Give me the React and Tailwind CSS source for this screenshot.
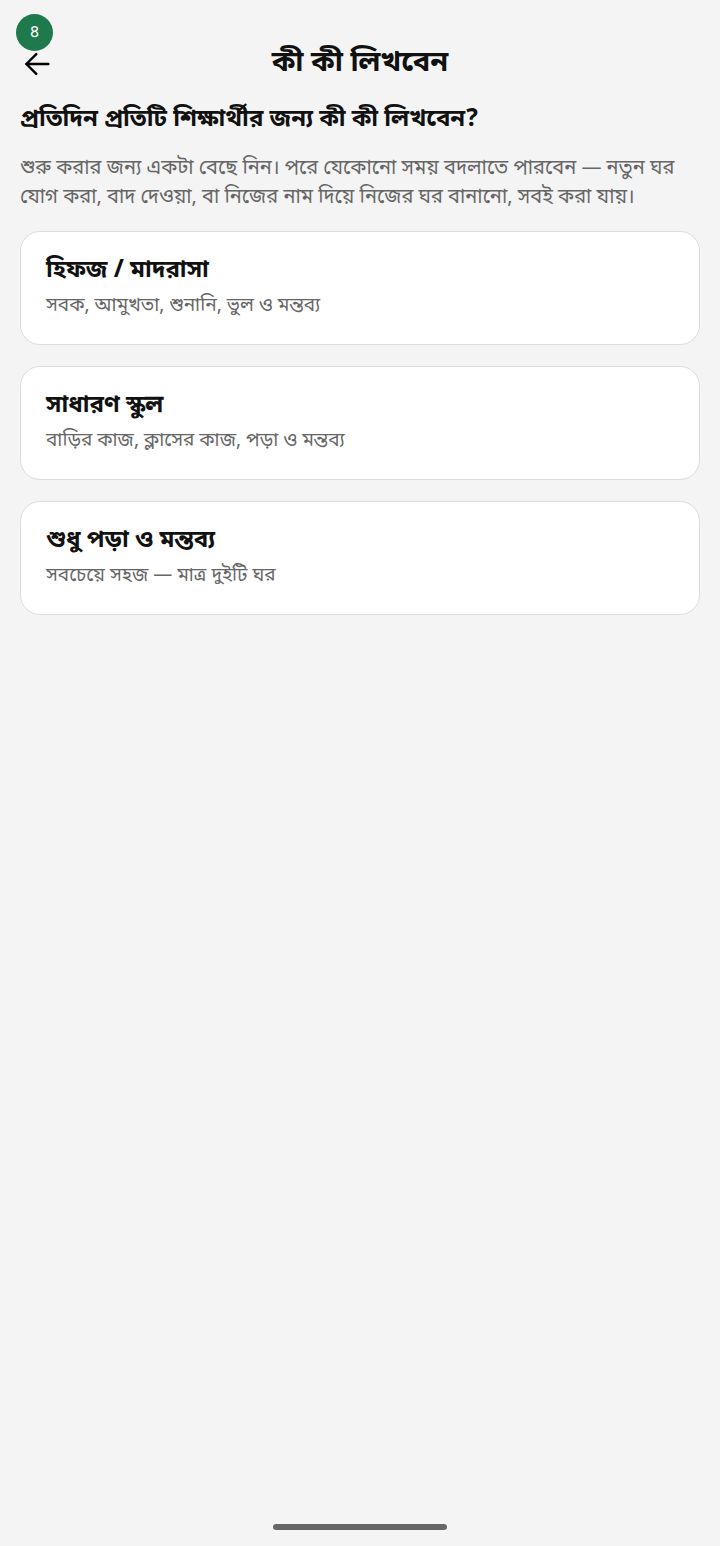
import React from 'react'

const options = [
  { title: <>হিফজ / মাদরাসা</>, body: 'সবক, আমুখতা, শুনানি, ভুল ও মন্তব্য' },
  { title: <>সাধারণ স্কু<span className="font-semibold [-webkit-text-stroke:0.6px_#111]">ল</span></>, body: 'বাড়ির কাজ, ক্লাসের কাজ, পড়া ও মন্তব্য' },
  { title: <>শুধু পড়া ও মন্তব্য</>, body: 'সবচেয়ে সহজ — মাত্র দুইটি ঘর' },
]

const App = () => {
  return (
    <div
      className="relative w-[720px] h-[1546px] bg-[#f4f4f4] flex flex-col"
      style={{ fontFamily: '"Noto Sans Bengali", "Noto Sans", "Lohit Bengali", sans-serif' }}
    >
      {/* Step badge */}
      <div className="absolute left-[16px] top-[14px] w-[37px] h-[37px] rounded-full bg-[#1e7a4c] text-white flex items-center justify-center text-[17px] leading-none">
        ৪
      </div>

      {/* Header */}
      <div className="flex items-center h-[60px] mt-[34px] px-[20px]">
        <button className="w-[40px] h-[40px] flex items-center justify-start text-black">
          <svg width="34" height="34" viewBox="0 0 24 24" fill="none" stroke="currentColor" strokeWidth="1.7" strokeLinecap="round" strokeLinejoin="round">
            <path d="M20 12H4.5" />
            <path d="M11.5 19l-7-7 7-7" />
          </svg>
        </button>
        <h1 className="flex-1 text-center text-[29px] font-bold text-[#111] pr-[40px]">কী কী লিখবেন</h1>
      </div>

      {/* Intro */}
      <div className="px-[20px] pt-[10px]">
        <h2 className="text-[24px] font-bold text-[#111] leading-[32px]">প্রতিদিন প্রতিটি শিক্ষার্থীর জন্য কী কী লিখবেন?</h2>
        <p className="mt-[19px] text-[20px] leading-[29px] text-[#666]">
          শুরু করার জন্য একটা বেছে নিন। পরে যেকোনো সময় বদলাতে পারবেন — নতুন ঘর যোগ করা, বাদ দেওয়া, বা নিজের নাম দিয়ে নিজের ঘর বানানো, সবই করা যায়।
        </p>
      </div>

      {/* Options */}
      <div className="flex flex-col gap-[21px] px-[20px] mt-[18px]">
        {options.map((o, i) => (
          <button
            key={i}
            className="h-[114px] w-full bg-white rounded-[20px] border border-[#dcdcdc] px-[25px] flex flex-col justify-center items-start text-left"
          >
            <div className="text-[24px] font-bold text-[#111] leading-[32px]">{o.title}</div>
            <div className="mt-[6px] text-[19px] text-[#666] leading-[28px]">{o.body}</div>
          </button>
        ))}
      </div>

      {/* Home indicator */}
      <div className="absolute bottom-[16px] left-[273px] w-[174px] h-[6px] rounded-full bg-[#666]" />
    </div>
  )
}

export default App
